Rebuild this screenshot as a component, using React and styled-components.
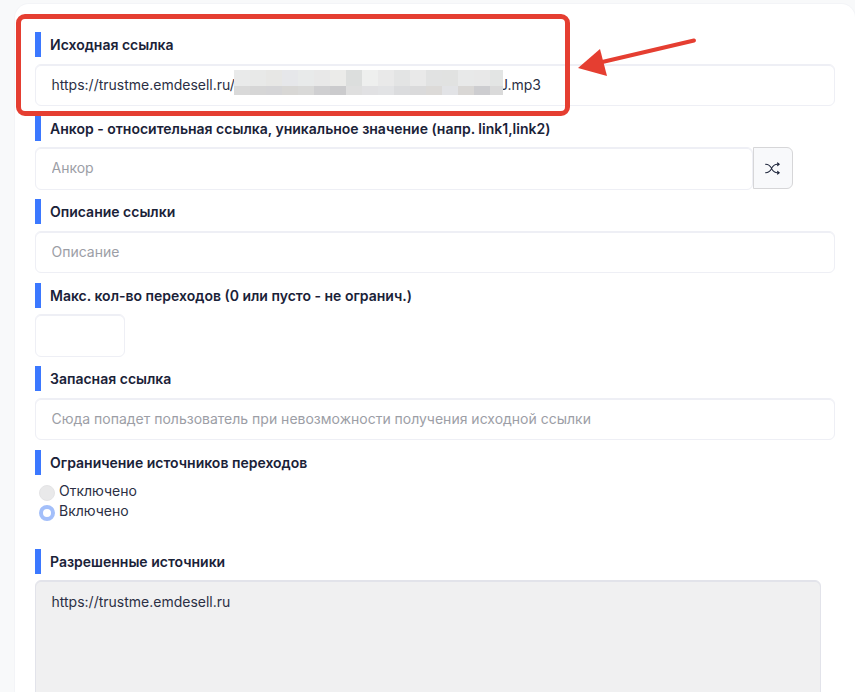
import React from "react"
import styled, { createGlobalStyle } from "styled-components"
import { BsShuffle } from "react-icons/bs"

const GlobalStyle = createGlobalStyle`
  html, body {
    margin: 0;
    height: 692px;
    overflow: hidden;
    background: #f8f9fa;
    font-family: "Inter", "Liberation Sans", sans-serif;
  }
`

const Page = styled.div`
  position: relative;
  padding: 4px 0 0 15px;
`

const Card = styled.form`
  background: #fff;
  border-radius: 14px 14px 0 0;
  box-shadow: 0 0 0 1px #f3f4f7;
  padding: 28px 20px 0;
  height: 688px;
  box-sizing: border-box;
`

const Group = styled.div`
  margin-bottom: ${p => p.$gap ?? 9.6}px;
`

const Label = styled.div`
  height: 25px;
  margin-bottom: 6.5px;
  padding-left: 9px;
  border-left: 6px solid #3b78ff;
  display: flex;
  align-items: center;
  font-size: 14px;
  font-weight: 600;
  color: #1a2238;
`

const fieldStyles = `
  box-sizing: border-box;
  height: 42.5px;
  padding: 0 15.5px;
  background: #fff;
  border: 1px solid #eeeff5;
  box-shadow: inset 0 1px 0 #eeeff5;
  border-radius: 6px;
  font-family: inherit;
  font-size: 14px;
  color: #2b2f44;
  outline: none;
`

const Input = styled.input`
  ${fieldStyles}
  display: block;
  padding-bottom: 1px;
  width: ${p => p.$width || "800px"};
  &::placeholder {
    color: #9c9ea6;
    opacity: 1;
  }
`

const ValueField = styled.div`
  ${fieldStyles}
  width: 800px;
  display: flex;
  align-items: center;
`

// the pixelated patch hides the middle of the link and clips the last letter
const Censor = styled.div`
  display: grid;
  grid-template-columns: repeat(17, 16px);
  grid-template-rows: 16px 9px;
  width: 269px;
  overflow: hidden;
  margin: 0 -3px 4.5px -1px;
  z-index: 1;
`

const CensorCell = styled.span`
  background: ${p => p.$color};
`

const InputRow = styled.div`
  display: flex;
  width: 758px;
`

const ShuffleButton = styled.button`
  box-sizing: border-box;
  width: 40px;
  height: 42px;
  flex: none;
  display: flex;
  align-items: center;
  justify-content: center;
  padding: 0 1px 0 0;
  background: #f8f9fb;
  border: 1px solid #d6d6d8;
  border-radius: 0 6px 6px 0;
  color: #1a2238;
  font-size: 15px;
`

const RadioList = styled.div`
  display: flex;
  flex-direction: column;
  gap: 4px;
  margin: 8px 0 30px 4px;
`

const RadioRow = styled.label`
  display: flex;
  align-items: flex-start;
  gap: 4px;
  height: 16px;
  font-size: 14px;
  line-height: 15px;
  color: #2b2f44;
`

const RadioDot = styled.span`
  box-sizing: border-box;
  width: 16px;
  height: 16px;
  margin-top: 2px;
  border-radius: 50%;
  background: ${p => (p.$checked ? "#fff" : "#e9e9ea")};
  border: ${p => (p.$checked ? "4px solid #a3bffa" : "1px solid #e4e4e6")};
`

const Sources = styled.textarea`
  ${fieldStyles}
  display: block;
  width: 786px;
  height: 200px;
  padding: 12px 15.5px;
  background: #f0f0f1;
  border-color: #e2e3ea;
  box-shadow: inset 0 1px 0 #e2e3ea;
  resize: none;
  line-height: 18px;
`

const Annotation = styled.svg`
  position: absolute;
  left: 0;
  top: 0;
  pointer-events: none;
`

const HighlightBox = styled.div`
  position: absolute;
  left: 16px;
  top: 14px;
  width: 554px;
  height: 102px;
  box-sizing: border-box;
  border: 5px solid #e53e31;
  border-radius: 9px;
  pointer-events: none;
`

const censorColors = [
  "#e9eaea", "#e8e9e8", "#e7e7e5", "#e6e7ea", "#e8eaea", "#e8e8e8", "#ebebe9", "#dcdedd", "#eeefee",
  "#e9e9e9", "#e3e4e4", "#e9e9e9", "#e1e2e2", "#e1e2e1", "#e8e9e9", "#e8e8e8", "#e3e5e4",
  "#d9d9d9", "#d6d6d6", "#d5d5d7", "#d8d7d5", "#d9d9d8", "#cfcfd1", "#cbcbcd", "#dfdfdf", "#e1e1e3",
  "#e2e3e5", "#dbdcde", "#dadadb", "#dcdad8", "#e2e3e6", "#d9d7d5", "#cdcdd0", "#dadada",
]

const App = () => (
  <Page>
    <GlobalStyle />
    <Card onSubmit={e => e.preventDefault()}>
      <Group>
        <Label>Исходная ссылка</Label>
        <ValueField>
          https://trustme.emdesell.ru/
          <Censor>
            {censorColors.map((color, i) => (
              <CensorCell key={i} $color={color} />
            ))}
          </Censor>
          J.mp3
        </ValueField>
      </Group>
      <Group>
        <Label>Анкор - относительная ссылка, уникальное значение (напр. link1,link2)</Label>
        <InputRow>
          <Input $width="718px" placeholder="Анкор" />
          <ShuffleButton type="button">
            <BsShuffle />
          </ShuffleButton>
        </InputRow>
      </Group>
      <Group>
        <Label>Описание ссылки</Label>
        <Input placeholder="Описание" />
      </Group>
      <Group>
        <Label>Макс. кол-во переходов (0 или пусто - не огранич.)</Label>
        <Input $width="90px" />
      </Group>
      <Group>
        <Label>Запасная ссылка</Label>
        <Input placeholder="Сюда попадет пользователь при невозможности получения исходной ссылки" />
      </Group>
      <Group $gap={0}>
        <Label>Ограничение источников переходов</Label>
        <RadioList>
          <RadioRow>
            <RadioDot />
            Отключено
          </RadioRow>
          <RadioRow>
            <RadioDot $checked />
            Включено
          </RadioRow>
        </RadioList>
      </Group>
      <Group $gap={0}>
        <Label>Разрешенные источники</Label>
        <Sources readOnly value="https://trustme.emdesell.ru" />
      </Group>
    </Card>
    <HighlightBox />
    <Annotation width="855" height="692" viewBox="0 0 855 692">
      <line x1="694" y1="40.5" x2="598" y2="63" stroke="#e53e31" strokeWidth="4" strokeLinecap="round" />
      <polygon points="578,68 600,49 607,76" fill="#e53e31" />
    </Annotation>
  </Page>
)

export default App
